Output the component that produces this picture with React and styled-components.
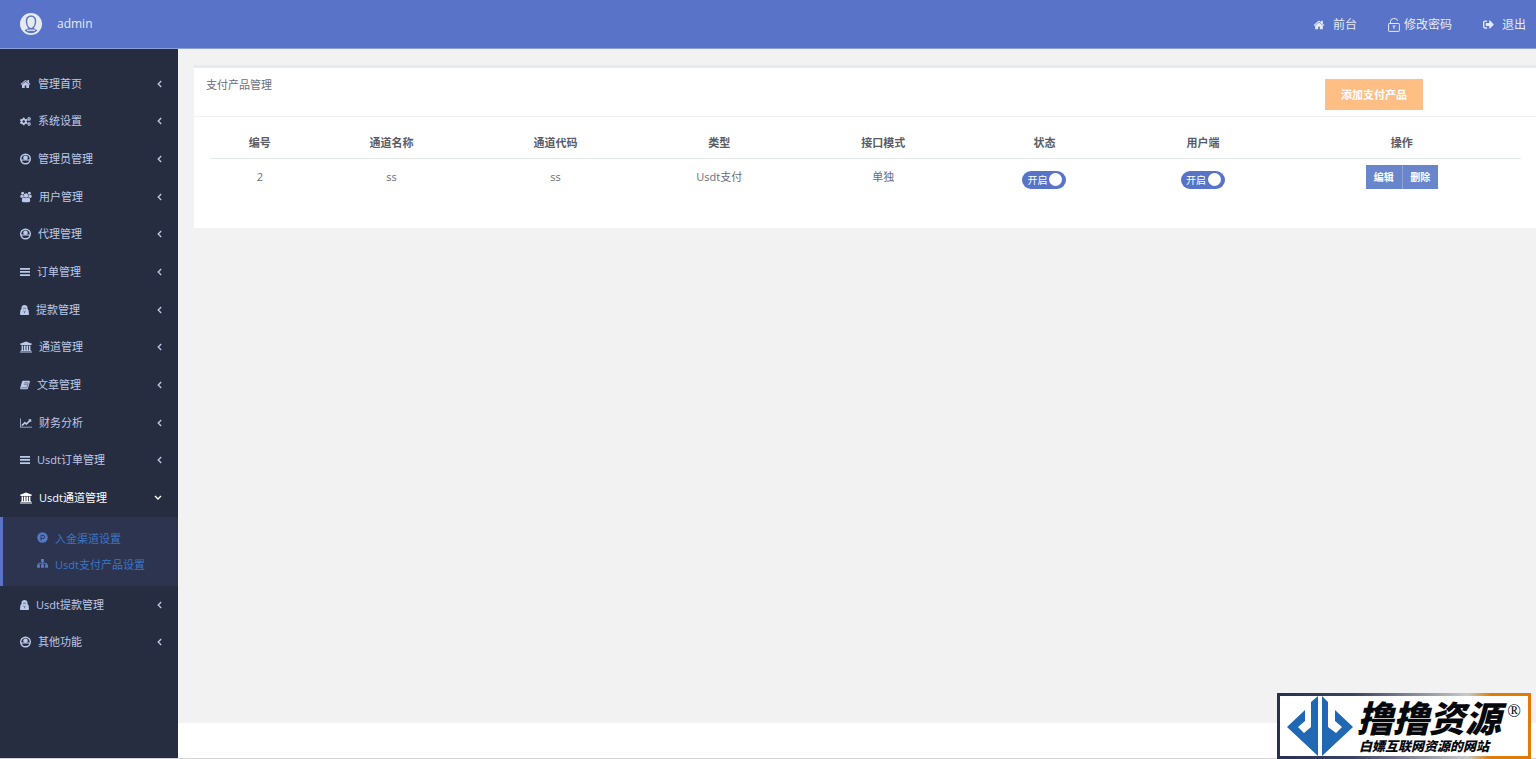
import { useState } from 'react';
import styled, { createGlobalStyle } from 'styled-components';
import { FaCogs, FaSignOutAlt } from 'react-icons/fa';

const GlobalStyle = createGlobalStyle`
  * {
    box-sizing: border-box;
  }
  body {
    margin: 0;
    background: #fff;
    color: #6b6c7c;
    font-family: 'Open Sans', 'Noto Sans CJK SC', sans-serif;
    font-size: 11px;
  }
  a {
    color: inherit;
    text-decoration: none;
  }
  button {
    font-family: inherit;
    cursor: pointer;
  }
`;

const HomeIcon = (props) => (
  <svg viewBox="0 0 1792 1792" fill="currentColor" {...props}>
    <path d="M1472 992v480q0 26-19 45t-45 19h-384v-384h-256v384h-384q-26 0-45-19t-19-45v-480q0-1 .5-3t.5-3l575-474 575 474q1 2 1 6zm223-69l-62 74q-8 9-21 11h-3q-13 0-21-7l-692-577-692 577q-12 8-24 7-13-2-21-11l-62-74q-8-10-7-23.5t11-21.5l719-599q32-26 76-26t76 26l244 204v-195q0-14 9-23t23-9h192q14 0 23 9t9 23v408l219 182q10 8 11 21.5t-7 23.5z" />
  </svg>
);

const UserIcon = (props) => (
  <svg viewBox="0 0 22 22" {...props}>
    <circle cx="11" cy="11" r="9.6" fill="none" stroke="currentColor" strokeWidth="2.8" />
    <ellipse cx="11" cy="8.500" rx="4.6" ry="4.6" fill="currentColor" />
    <path d="M1.500 12h19l-2 3c-1.500-.8-2.500-1-4-1h-7c-1.500 0-2.500.2-4 1z" fill="currentColor" />
  </svg>
);

const UsersIcon = (props) => (
  <svg viewBox="0 0 2048 1792" fill="currentColor" {...props}>
    <path d="M657 896q-162 5-265 128h-134q-82 0-138-40.5t-56-118.5q0-353 124-353 6 0 43.5 21t97.5 42.5 119 21.5q67 0 133-23-5 37-5 66 0 159 93 256zm1071 637q0 120-73 189.5t-194 69.5h-874q-121 0-194-69.5t-73-189.5q0-53 3.5-103.5t14-109 26.5-108.5 43-97.5 62-81 85.5-53.5 111.5-20q10 0 43 21.5t73 48 107 48 135 21.5 135-21.500 107-48 73-48 43-21.500q61 0 111.500 20t85.500 53.500 62 81 43 97.500 26.500 108.500 14 109 3.500 103.500zm-1024-1277q0 106-75 181t-181 75-181-75-75-181 75-181 181-75 181 75 75 181zm704 384q0 159-112.500 271.500t-271.500 112.500-271.500-112.500-112.500-271.500 112.500-271.500 271.500-112.500 271.500 112.500 112.500 271.500zm576 225q0 78-56 118.500t-138 40.500h-134q-103-123-265-128 93-97 93-256 0-29-5-66 66 23 133 23 59 0 119-21.500t97.500-42.500 43.500-21q124 0 124 353zm-128-609q0 106-75 181t-181 75-181-75-75-181 75-181 181-75 181 75 75 181z" />
  </svg>
);

const BarsIcon = (props) => (
  <svg viewBox="0 0 20 20" fill="currentColor" {...props}>
    <path d="M0 2h20v3.500H0zM0 8.200h20v3.500H0zM0 14.500h20v3.500H0z" />
  </svg>
);

const BagIcon = (props) => (
  <svg viewBox="0 0 18 22" {...props}>
    <path
      d="M3 9V6C3 2.800 5.500 1 9 1s6 1.800 6 5v3l2 2 1 7.500c0 1.500-.8 2.500-2 2.500H2c-1.200 0-2-1-2-2.500L1 11z"
      fill="currentColor"
    />
    <path d="M6 7.500h6M6.500 12.500L9 14.500l2.500-2M9 14.500v3" fill="none" stroke="#272d40" strokeWidth="1" />
  </svg>
);

const BankIcon = (props) => (
  <svg viewBox="0 0 1920 1792" fill="currentColor" {...props}>
    <path d="M960 0l960 384v128h-128q0 26-20.5 45t-48.5 19h-1526q-28 0-48.5-19t-20.5-45h-128v-128zm-704 640h256v768h128v-768h256v768h128v-768h256v768h128v-768h256v768h59q28 0 48.5 19t20.5 45v64h-1664v-64q0-26 20.5-45t48.5-19h59v-768zm1595 960q28 0 48.5 19t20.5 45v128h-1920v-128q0-26 20.5-45t48.5-19h1782z" />
  </svg>
);

const BookIcon = (props) => (
  <svg viewBox="0 0 20 20" {...props}>
    <path d="M6.500 1.500h12c1 0 1.600.8 1.300 1.800L16 16.500c-.4 1.300-1.200 2-2.500 2H2.500C1 18.500 0 17.200.4 15.800L4 3.500c.4-1.300 1.200-2 2.500-2z" fill="currentColor" />
    <path d="M8.500 5.500h7M7.500 8.500h7M2.500 15.500h11l3-10" fill="none" stroke="#272d40" strokeWidth="1" />
  </svg>
);

const ChartIcon = (props) => (
  <svg viewBox="0 0 2048 1792" fill="currentColor" {...props}>
    <path d="M2048 1536v128h-2048v-1536h128v1408h1920zm-128-1248v435q0 21-19.5 29.5t-35.5-7.5l-121-121-633 633q-10 10-23 10t-23-10l-233-233-416 416-192-192 585-585q10-10 23-10t23 10l233 233 464-464-121-121q-16-16-7.5-35.500t29.500-19.500h435q14 0 23 9t9 23z" />
  </svg>
);

const ProductIcon = (props) => (
  <svg viewBox="0 0 22 22" {...props}>
    <circle cx="11" cy="11" r="10.500" fill="currentColor" />
    <path d="M8 17V6.500h4a3 3 0 0 1 0 6.500H8" fill="none" stroke="#2c3450" strokeWidth="1.800" />
  </svg>
);

const SitemapIcon = (props) => (
  <svg viewBox="0 0 22 22" {...props}>
    <path d="M8 2h6v6H8zM0 13h6v6.500H0zM8 13h6v6.500H8zM16 13h6v6.500h-6z" fill="currentColor" />
    <path d="M11 7v7M3 14v-3.500h16V14" fill="none" stroke="currentColor" strokeWidth="2" />
  </svg>
);

const UnlockIcon = (props) => (
  <svg viewBox="0 0 12 14" fill="none" stroke="currentColor" {...props}>
    <rect x="0.6" y="5.500" width="10.800" height="7.900" rx="0.600" />
    <path d="M2.500 5.500V3.500a2.900 2.900 0 0 1 2.900-2.900h1.600a2.600 2.600 0 0 1 2.600 2.200M4.500 8h3M6 8v3" />
  </svg>
);

const ArrowLeft = (props) => (
  <svg viewBox="0 0 5 8" width="5" height="8" fill="none" stroke="currentColor" strokeWidth="1.3" {...props}>
    <path d="M4.200 1L1.200 4l3 3" />
  </svg>
);

const ArrowDown = (props) => (
  <svg viewBox="0 0 8 5" width="8" height="5" fill="none" stroke="currentColor" strokeWidth="1.4" {...props}>
    <path d="M1 1l3 3 3-3" />
  </svg>
);

const AvatarIcon = (props) => (
  <svg viewBox="0 0 22 22" {...props}>
    <circle cx="11" cy="11" r="11" fill="#e6eaf0" />
    <path
      d="M11 2.600c3.400 0 5.200 2.200 5.200 5.600 0 2.800-.9 4.800-2 6v1c0 .9 2.200 1.200 3.200 2.100-1.700 2-3.900 2.900-6.400 2.900s-4.700-.9-6.400-2.900c1-.9 3.200-1.200 3.200-2.100v-1c-1.100-1.200-2-3.200-2-6 0-3.400 1.800-5.600 5.200-5.600z"
      fill="#5873c8"
    />
    <path d="M11 3.800c2.500 0 3.800 1.600 3.800 4.500 0 3.500-1.400 6.600-3.800 6.600s-3.800-3.100-3.800-6.600c0-2.900 1.300-4.500 3.800-4.500z" fill="#e6eaf0" />
    <path d="M7 17.200h8" stroke="#e6eaf0" strokeWidth="1.200" />
  </svg>
);

const Page = styled.div`
  display: flex;
  flex-direction: column;
  min-height: 100vh;
  border-bottom: 1px solid #d3d3d6;
`;

const Header = styled.header`
  display: flex;
  align-items: center;
  justify-content: space-between;
  height: 49px;
  padding: 0 10px 0 20px;
  background: #5873c8;
  border-bottom: 1px solid #8c9fdb;
  color: #e6eaf4;
  font-size: 12px;
`;

const Account = styled.a`
  display: flex;
  align-items: center;
  gap: 15px;
  padding-bottom: 1px;
`;

const TopNav = styled.nav`
  display: flex;
  gap: 31px;
  padding-top: 1px;
`;

const TopLink = styled.a`
  display: flex;
  align-items: center;
  gap: ${(p) => p.$gap || 8}px;
  line-height: 20px;
`;

const Body = styled.div`
  display: flex;
  flex: 1;
`;

const Sidebar = styled.aside`
  flex: none;
  width: 178px;
  padding-top: 16px;
  background: #272d40;
`;

const Menu = styled.ul`
  display: flex;
  flex-direction: column;
  min-height: 596px;
  margin: 0;
  padding: 0;
  list-style: none;
`;

const MenuItem = styled.li`
  display: flex;
  flex-direction: column;
  flex: 1 1 auto;
`;

const MenuLink = styled.a`
  display: flex;
  align-items: center;
  flex: 1 1 auto;
  gap: 7px;
  padding: 0 16px 0 20px;
  color: ${(p) => (p.$active ? '#fff' : '#bdc9e8')};
  line-height: 20px;
  svg {
    flex: none;
  }
  .arrow {
    margin-left: auto;
  }
`;

const SubMenu = styled.ul`
  margin: 0;
  padding: 8px 0 9px 34px;
  border-left: 3px solid #5873c8;
  background: #2c3450;
  list-style: none;
`;

const SubLink = styled.a`
  display: flex;
  align-items: center;
  gap: 7px;
  height: 26px;
  color: #3f76c4;
  svg {
    color: #5477c9;
  }
`;

const Content = styled.main`
  flex: 1;
  min-width: 0;
  margin-bottom: 35px;
  padding: 16px 0 0 16px;
  background: #f2f2f2;
`;

const Card = styled.section`
  border-top: 3px solid #e7ebee;
  background: #fff;
`;

const CardHeader = styled.div`
  display: flex;
  align-items: flex-start;
  justify-content: space-between;
  height: 49px;
  padding: 11px 113px 0 12px;
  border-bottom: 1px solid #eff0f1;
`;

const CardTitle = styled.h2`
  margin: 0;
  font-size: 11px;
  font-weight: 400;
  line-height: 12px;
`;

const AddButton = styled.button`
  height: 31px;
  padding: 0 16px 2px;
  border: 0;
  background: #ffbe84;
  color: #fff;
  font-size: 11px;
  font-weight: 600;
`;

const TableWrap = styled.div`
  padding: 9px 15px 35px 16px;
`;

const Table = styled.table`
  width: 100%;
  table-layout: fixed;
  border-collapse: collapse;
  text-align: center;
`;

const Th = styled.th`
  width: ${(p) => p.$width};
  height: 32px;
  padding: 0;
  border-bottom: 1px solid #e4e9ea;
  color: #5a5b66;
  font-weight: 600;
`;

const Td = styled.td`
  height: 35px;
  padding: 6px 0 0;
  line-height: 24px;
  vertical-align: top;
`;

const Switch = styled.label`
  display: inline-flex;
  align-items: center;
  justify-content: space-between;
  width: 44px;
  height: 18px;
  margin-top: 6px;
  padding: 0 4px 0 5px;
  border-radius: 9px;
  background: ${(p) => (p.$on ? '#5873c8' : '#b5bac8')};
  color: #fff;
  font-size: 10px;
  line-height: 18px;
  vertical-align: top;
  cursor: pointer;
  input {
    width: 13px;
    height: 13px;
    margin: 0;
    border-radius: 50%;
    background: #fff;
    appearance: none;
  }
`;

const ButtonGroup = styled.div`
  display: inline-flex;
  vertical-align: top;
`;

const ActionButton = styled.button`
  width: 36px;
  height: 24px;
  padding: 0;
  border: 0;
  background: #6985cc;
  color: #fff;
  font-size: 10px;
  font-weight: 600;
  & + & {
    border-left: 1px solid #8fa3cf;
  }
`;

const Watermark = styled.div`
  position: fixed;
  right: 5px;
  bottom: 0;
  display: flex;
  align-items: center;
  width: 254px;
  height: 66px;
  padding-left: 7px;
  border: 3px solid;
  border-image: linear-gradient(90deg, #27304f 0%, #3a4360 30%, #c9c9c9 75%, #e07c05 84%, #e07c05 100%) 3;
  background: #fff;
  color: #07080c;
  white-space: nowrap;
  svg {
    flex: none;
  }
`;

const Brand = styled.div`
  flex: 1;
  padding: 3px 0 0 4px;
  font-style: italic;
  font-weight: 900;
  .name {
    font-size: 36px;
    line-height: 36px;
  }
  .slogan {
    padding: 1px 0 0 2px;
    font-size: 13px;
    line-height: 16px;
  }
`;

const Registered = styled.span`
  align-self: flex-start;
  margin: 5px 7px 0 0;
  font-family: 'Liberation Serif', serif;
  font-size: 18px;
  line-height: 20px;
`;

const MENU = [
  { text: '管理首页', icon: HomeIcon, size: 11 },
  { text: '系统设置', icon: FaCogs, size: 12 },
  { text: '管理员管理', icon: UserIcon, size: 11 },
  { text: '用户管理', icon: UsersIcon, size: 12 },
  { text: '代理管理', icon: UserIcon, size: 11 },
  { text: '订单管理', icon: BarsIcon, size: 10 },
  { text: '提款管理', icon: BagIcon, size: 9 },
  { text: '通道管理', icon: BankIcon, size: 12 },
  { text: '文章管理', icon: BookIcon, size: 10 },
  { text: '财务分析', icon: ChartIcon, size: 12 },
  { text: 'Usdt订单管理', icon: BarsIcon, size: 10 },
  {
    text: 'Usdt通道管理',
    icon: BankIcon,
    size: 12,
    children: [
      { text: '入金渠道设置', icon: ProductIcon },
      { text: 'Usdt支付产品设置', icon: SitemapIcon }
    ]
  },
  { text: 'Usdt提款管理', icon: BagIcon, size: 9 },
  { text: '其他功能', icon: UserIcon, size: 11 }
];

const COLUMNS = [
  { title: '编号', width: '7.6%' },
  { title: '通道名称', width: '12.5%' },
  { title: '通道代码', width: '12.5%' },
  { title: '类型', width: '12.5%' },
  { title: '接口模式', width: '12.5%' },
  { title: '状态', width: '12.1%' },
  { title: '用户端', width: '12.1%' },
  { title: '操作', width: '18.2%' }
];

function Toggle({ label }) {
  const [on, setOn] = useState(true);
  return (
    <Switch $on={on}>
      {on ? '开启' : '关闭'}
      <input type="checkbox" aria-label={label} checked={on} onChange={() => setOn(!on)} />
    </Switch>
  );
}

function SideMenu() {
  return (
    <Menu>
      {MENU.map(({ text, icon: Icon, size, children }) => (
        <MenuItem key={text}>
          <MenuLink href="#" $active={!!children}>
            <Icon width={size} height={12} />
            <span>{text}</span>
            {children ? <ArrowDown className="arrow" /> : <ArrowLeft className="arrow" />}
          </MenuLink>
          {children && (
            <SubMenu>
              {children.map(({ text: subText, icon: SubIcon }) => (
                <li key={subText}>
                  <SubLink href="#">
                    <SubIcon width={11} height={11} />
                    {subText}
                  </SubLink>
                </li>
              ))}
            </SubMenu>
          )}
        </MenuItem>
      ))}
    </Menu>
  );
}

export default function App() {
  return (
    <Page>
      <GlobalStyle />
      <Header>
        <Account href="#">
          <AvatarIcon width={22} height={22} />
          <span>admin</span>
        </Account>
        <TopNav>
          <TopLink href="#">
            <HomeIcon width={12} height={12} />
            前台
          </TopLink>
          <TopLink href="#" $gap={4}>
            <UnlockIcon width={12} height={14} />
            修改密码
          </TopLink>
          <TopLink href="#">
            <FaSignOutAlt size={11} />
            退出
          </TopLink>
        </TopNav>
      </Header>
      <Body>
        <Sidebar>
          <SideMenu />
        </Sidebar>
        <Content>
          <Card>
            <CardHeader>
              <CardTitle>支付产品管理</CardTitle>
              <AddButton type="button">添加支付产品</AddButton>
            </CardHeader>
            <TableWrap>
              <Table>
                <thead>
                  <tr>
                    {COLUMNS.map((c) => (
                      <Th key={c.title} $width={c.width}>
                        {c.title}
                      </Th>
                    ))}
                  </tr>
                </thead>
                <tbody>
                  <tr>
                    <Td>2</Td>
                    <Td>ss</Td>
                    <Td>ss</Td>
                    <Td>Usdt支付</Td>
                    <Td>单独</Td>
                    <Td>
                      <Toggle label="状态" />
                    </Td>
                    <Td>
                      <Toggle label="用户端" />
                    </Td>
                    <Td>
                      <ButtonGroup>
                        <ActionButton type="button">编辑</ActionButton>
                        <ActionButton type="button">删除</ActionButton>
                      </ButtonGroup>
                    </Td>
                  </tr>
                </tbody>
              </Table>
            </TableWrap>
          </Card>
        </Content>
      </Body>
      <Watermark>
        <svg width="66" height="60" viewBox="0 0 66 60" fill="#2068b4">
          <path d="M31 0v60L0 31l18-17v11l-7 6 6 6 7-6V6z" />
          <path d="M35 0v60l31-29-18-17v11l7 6-6 6-8-6V6z" />
        </svg>
        <Brand>
          <div className="name">撸撸资源</div>
          <div className="slogan">白嫖互联网资源的网站</div>
        </Brand>
        <Registered>®</Registered>
      </Watermark>
    </Page>
  );
}
